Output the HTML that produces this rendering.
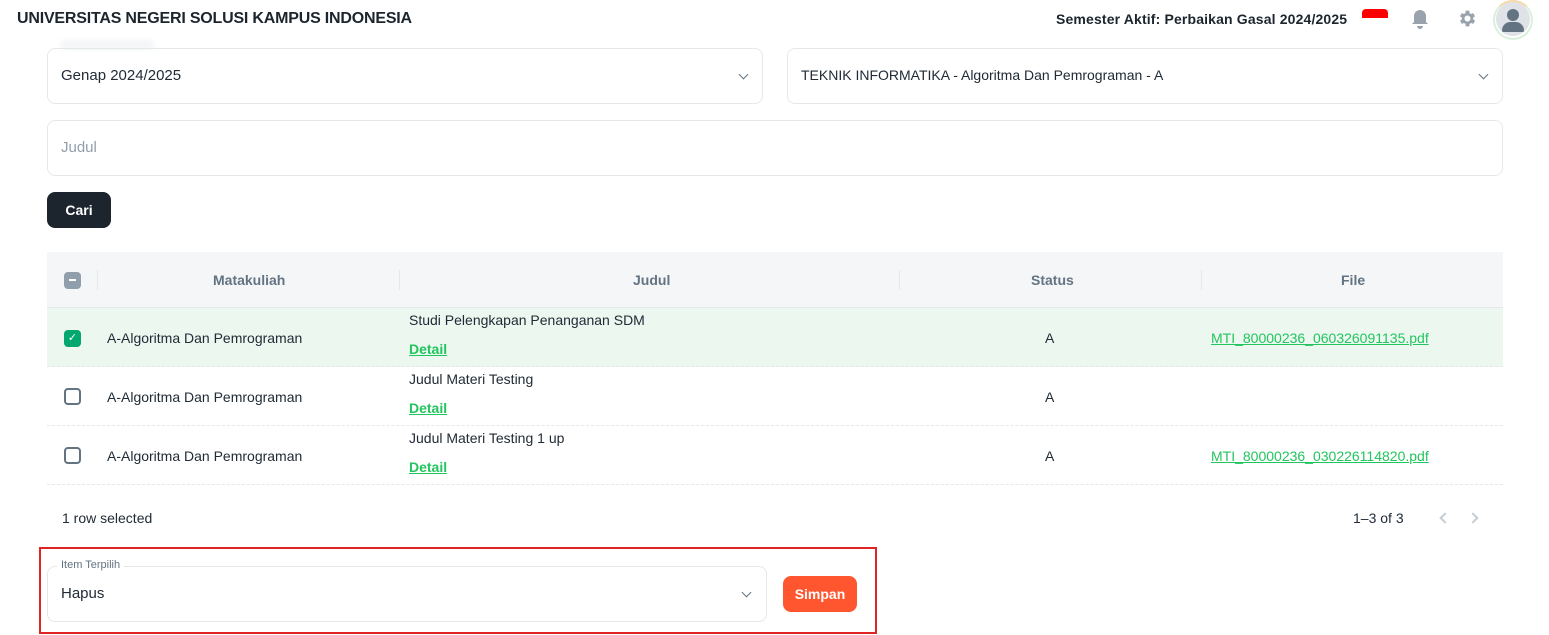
<!DOCTYPE html><html><head><meta charset="utf-8"><style>
*{box-sizing:border-box;margin:0;padding:0}
body{width:1549px;height:635px;overflow:hidden;background:#fff;font-family:"Liberation Sans",sans-serif;color:#212b36;position:relative}
.a{position:absolute}
.box{position:absolute;border:1px solid #e5e8eb;border-radius:8px}
.t{font-size:14px;white-space:nowrap}
.chev{position:absolute;width:7px;height:7px;border-right:1.5px solid #637381;border-bottom:1.5px solid #637381;transform:rotate(45deg)}
.row{position:absolute;left:47px;width:1456px;height:59px;border-bottom:1px dashed #e5e8eb}
.cb{position:absolute;left:17px;width:17px;height:17px;border:2px solid #637381;border-radius:4px}
.lnk{color:#22c55e;text-decoration:underline;font-size:14px}
</style></head><body>
<div class="a" style="left:17px;top:10px;font-size:16px;font-weight:bold;color:#1c252e;letter-spacing:-0.2px">UNIVERSITAS NEGERI SOLUSI KAMPUS INDONESIA</div>
<div class="a t" style="left:1056px;top:11px;font-weight:bold;color:#1c252e;letter-spacing:0.15px">Semester Aktif: Perbaikan Gasal 2024/2025</div>
<div class="a" style="left:1362px;top:9px;width:26px;height:9px;background:#f00;border-radius:4px 4px 0 0"></div>
<svg class="a" style="left:1410px;top:8px" width="20" height="22" viewBox="0 0 20 22"><path d="M10 2a6 6 0 0 0-6 6v6l-2 2h16l-2-2V8a6 6 0 0 0-6-6zM7 18a3 3 0 0 0 6 0z" fill="#9aa3ad"/></svg>
<svg class="a" style="left:1457px;top:8px" width="21" height="21" viewBox="0 0 24 24"><path d="M19.4 13a7.7 7.7 0 0 0 0-2l2.1-1.6-2-3.5-2.5 1a7.5 7.5 0 0 0-1.7-1L15 3h-4l-.4 2.9a7.5 7.5 0 0 0-1.7 1l-2.5-1-2 3.5L6.6 11a7.7 7.7 0 0 0 0 2l-2.1 1.6 2 3.5 2.5-1a7.5 7.5 0 0 0 1.7 1L11 21h4l.4-2.9a7.5 7.5 0 0 0 1.7-1l2.5 1 2-3.5zM13 15.5a3.5 3.5 0 1 1 0-7 3.5 3.5 0 0 1 0 7z" fill="#9aa3ad" transform="translate(-1 0)"/></svg>
<div class="a" style="left:1493px;top:0;width:40px;height:40px;border-radius:50%;border:2px solid #d9f0dd;border-top-color:#f5d9a8;background:#fff"></div>
<div class="a" style="left:1496px;top:2px;width:34px;height:34px;border-radius:50%;background:#dfe3e8;overflow:hidden">
<div class="a" style="left:11px;top:7px;width:12px;height:12px;border-radius:50%;background:#637381"></div>
<div class="a" style="left:6px;top:20px;width:22px;height:10px;border-radius:10px 10px 2px 2px;background:#637381"></div></div>
<div class="a" style="left:60px;top:40px;width:95px;height:10px;background:#f4f6f8;border-radius:5px;filter:blur(2px)"></div>
<div class="box" style="left:47px;top:48px;width:716px;height:56px"></div>
<div class="a t" style="left:61px;top:67px;font-size:15px">Genap 2024/2025</div>
<div class="chev" style="left:740px;top:71px"></div>
<div class="box" style="left:787px;top:48px;width:716px;height:56px"></div>
<div class="a t" style="left:801px;top:67px">TEKNIK INFORMATIKA - Algoritma Dan Pemrograman - A</div>
<div class="chev" style="left:1480px;top:71px"></div>
<div class="box" style="left:47px;top:120px;width:1456px;height:56px"></div>
<div class="a t" style="left:61px;top:139px;font-size:15px;color:#919eab">Judul</div>
<div class="a" style="left:47px;top:192px;width:64px;height:36px;background:#1c252e;border-radius:8px;color:#fff;font-weight:bold;font-size:14px;text-align:center;line-height:36px">Cari</div>
<div class="a" style="left:47px;top:252px;width:1456px;height:56px;background:#f4f6f8;border-bottom:1px solid #e5e8eb"></div>
<div class="a" style="left:64px;top:272px;width:17px;height:17px;border-radius:4px;background:#919eab"><div class="a" style="left:5px;top:7px;width:7px;height:2px;background:#fff"></div></div>
<div class="a t" style="left:213px;top:272px;color:#637381;font-weight:bold">Matakuliah</div>
<div class="a t" style="left:633px;top:272px;color:#637381;font-weight:bold">Judul</div>
<div class="a t" style="left:1031px;top:272px;color:#637381;font-weight:bold">Status</div>
<div class="a t" style="left:1341px;top:272px;color:#637381;font-weight:bold">File</div>
<div class="a" style="left:97px;top:270px;width:1px;height:20px;background:#e5e8eb"></div>
<div class="a" style="left:399px;top:270px;width:1px;height:20px;background:#e5e8eb"></div>
<div class="a" style="left:899px;top:270px;width:1px;height:20px;background:#e5e8eb"></div>
<div class="a" style="left:1201px;top:270px;width:1px;height:20px;background:#e5e8eb"></div>
<div class="row" style="top:308px;background:#ecf7f0"><div class="a" style="left:17px;top:22px;width:17px;height:17px;border-radius:4px;background:#00a76f;color:#fff;font-size:11px;text-align:center;line-height:17px">✓</div>
<div class="a t" style="left:60px;top:22px">A-Algoritma Dan Pemrograman</div><div class="a t" style="left:362px;top:4px">Studi Pelengkapan Penanganan SDM</div><div class="a lnk" style="left:362px;top:33px;font-weight:bold">Detail</div><div class="a t" style="left:998px;top:22px">A</div><div class="a lnk" style="left:1164px;top:22px">MTI_80000236_060326091135.pdf</div></div>
<div class="row" style="top:367px"><div class="cb" style="top:21px"></div>
<div class="a t" style="left:60px;top:22px">A-Algoritma Dan Pemrograman</div><div class="a t" style="left:362px;top:4px">Judul Materi Testing</div><div class="a lnk" style="left:362px;top:33px;font-weight:bold">Detail</div><div class="a t" style="left:998px;top:22px">A</div></div>
<div class="row" style="top:426px"><div class="cb" style="top:21px"></div>
<div class="a t" style="left:60px;top:22px">A-Algoritma Dan Pemrograman</div><div class="a t" style="left:362px;top:4px">Judul Materi Testing 1 up</div><div class="a lnk" style="left:362px;top:33px;font-weight:bold">Detail</div><div class="a t" style="left:998px;top:22px">A</div><div class="a lnk" style="left:1164px;top:22px">MTI_80000236_030226114820.pdf</div></div>
<div class="a t" style="left:62px;top:510px">1 row selected</div>
<div class="a t" style="left:1353px;top:510px">1–3 of 3</div>
<div class="a" style="left:1441px;top:514px;width:8px;height:8px;border-left:2px solid #c4cdd5;border-bottom:2px solid #c4cdd5;transform:rotate(45deg)"></div>
<div class="a" style="left:1469px;top:514px;width:8px;height:8px;border-right:2px solid #c4cdd5;border-top:2px solid #c4cdd5;transform:rotate(45deg)"></div>
<div class="a" style="left:39px;top:547px;width:838px;height:87px;border:2px solid #e02424"></div>
<div class="box" style="left:47px;top:566px;width:720px;height:56px"></div>
<div class="a" style="left:57px;top:559px;padding:0 4px;background:#fff;font-size:11px;color:#637381">Item Terpilih</div>
<div class="a t" style="left:61px;top:585px;font-size:15px">Hapus</div>
<div class="chev" style="left:743px;top:589px"></div>
<div class="a" style="left:783px;top:576px;width:74px;height:36px;background:#ff5630;border-radius:8px;color:#fff;font-weight:bold;font-size:14px;text-align:center;line-height:36px">Simpan</div>
</body></html>
